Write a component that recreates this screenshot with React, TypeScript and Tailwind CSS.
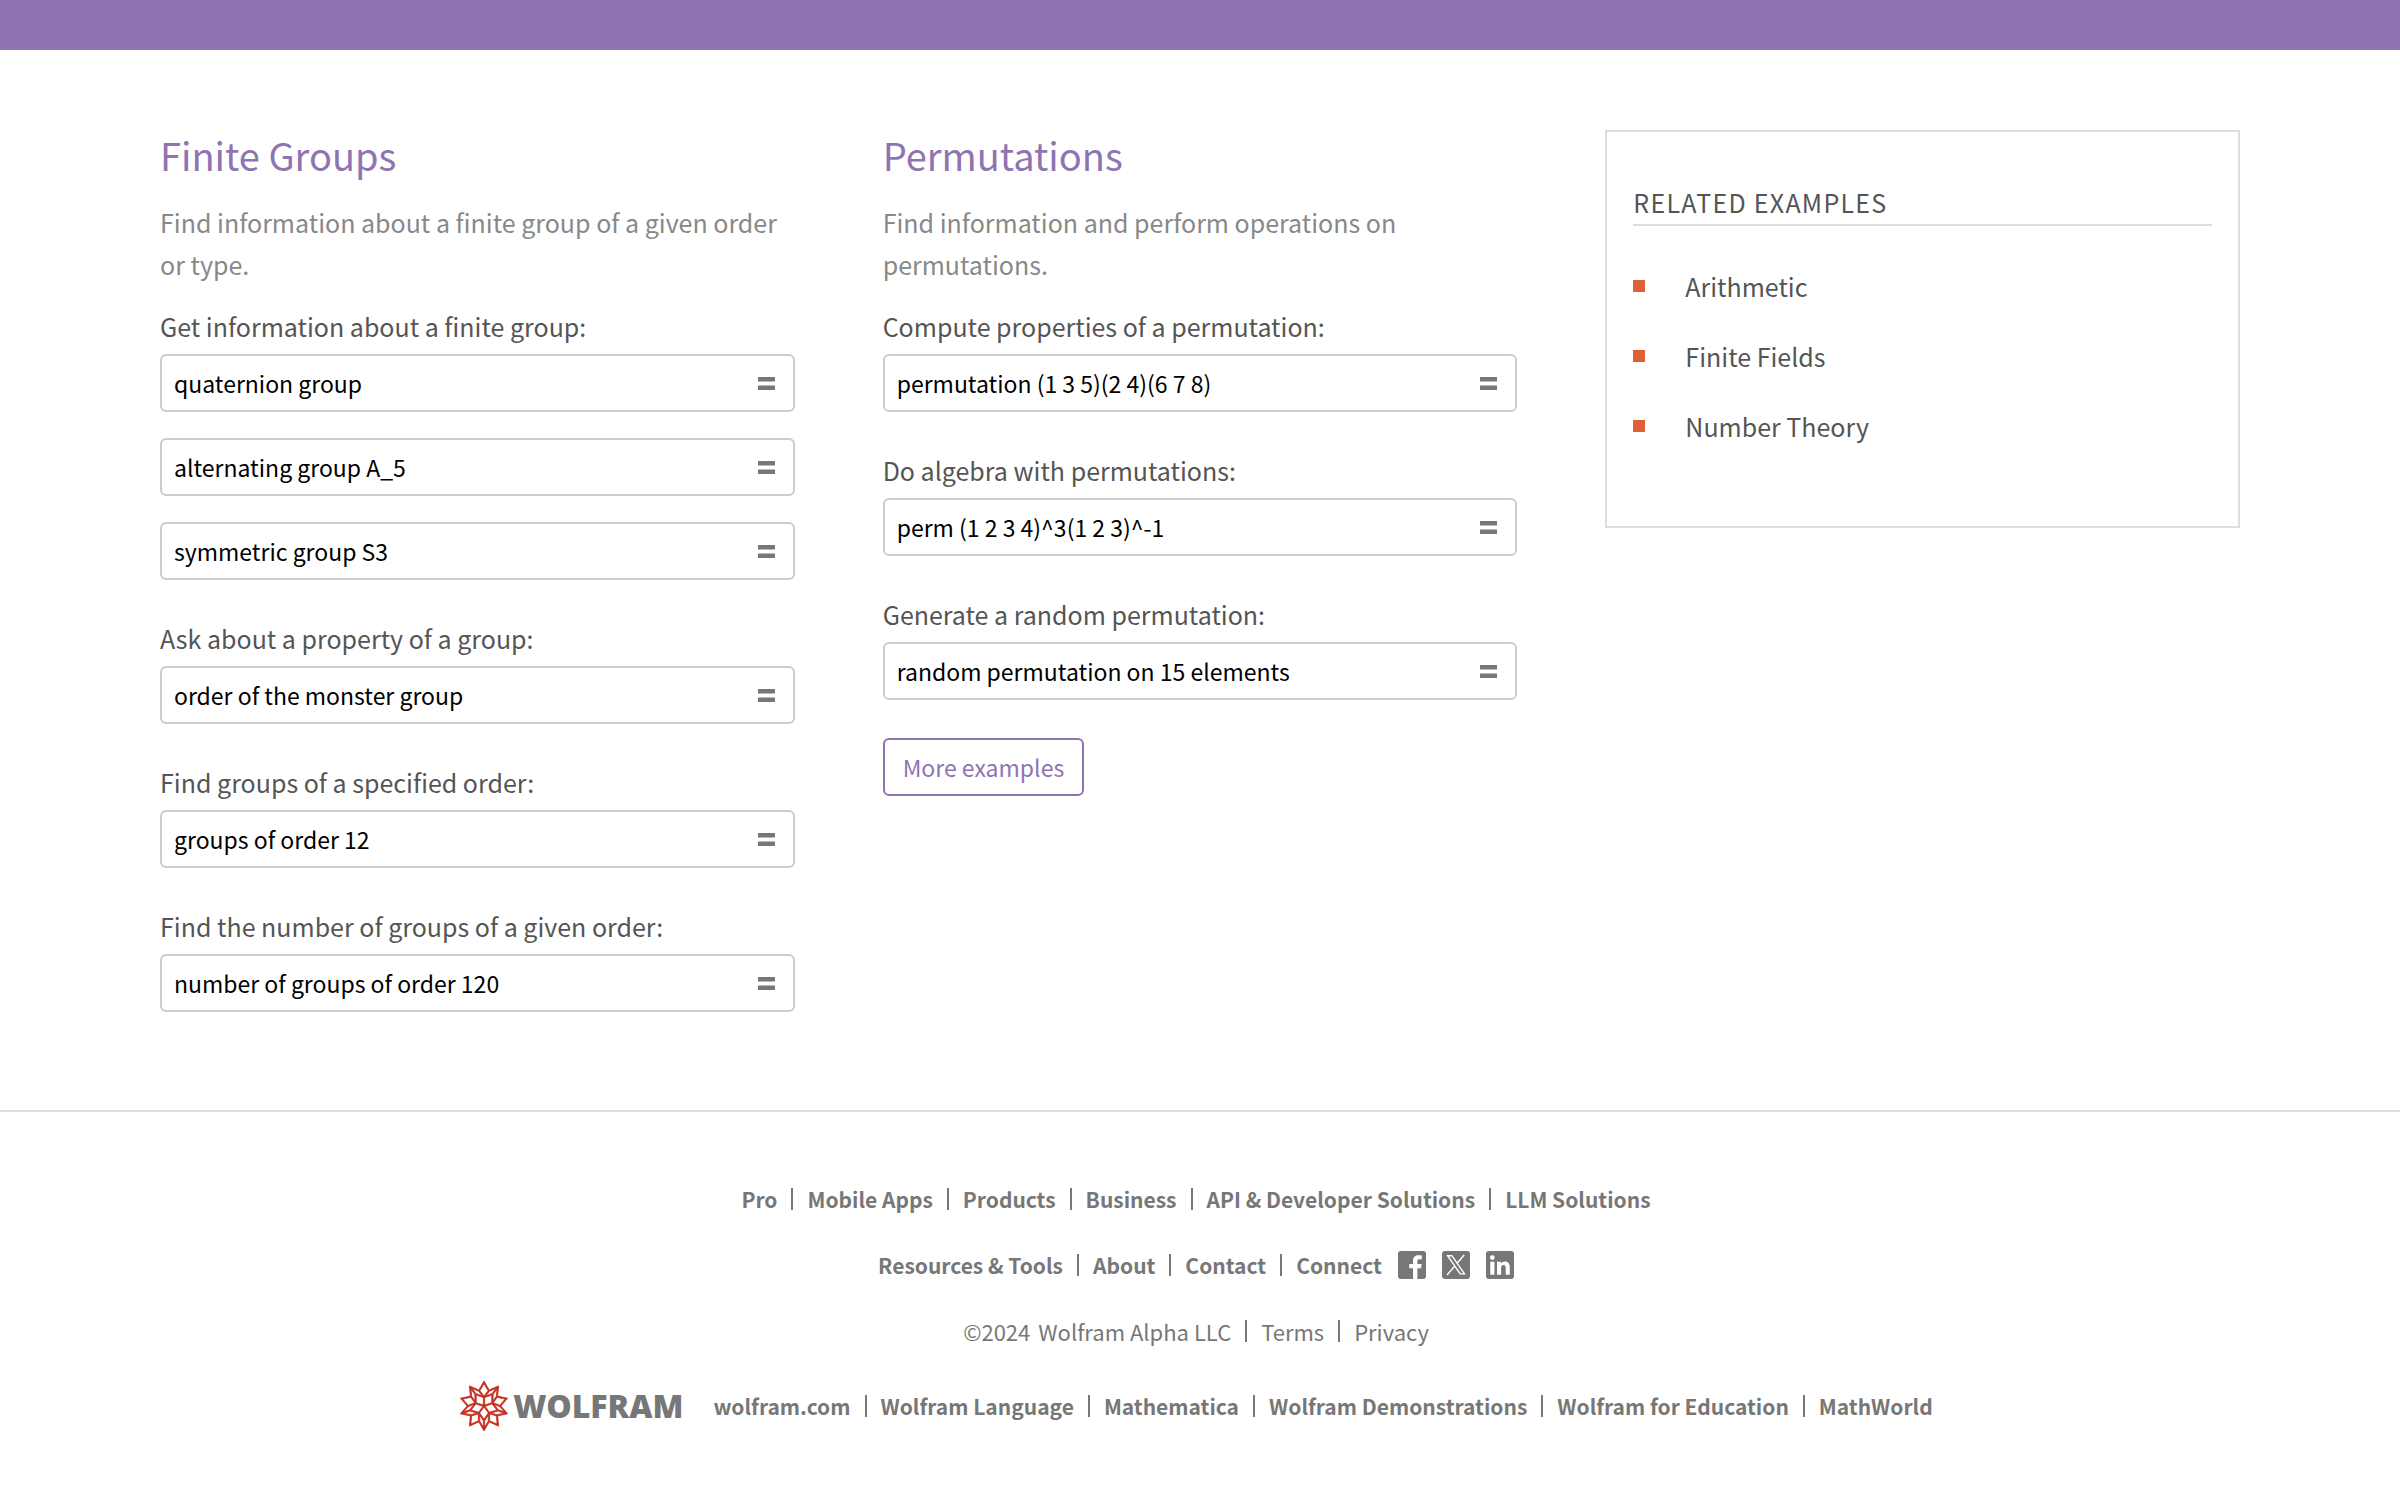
import { useId } from 'react';
import { SiWolfram } from 'react-icons/si';

type Example = { label: string; queries: string[] };

const finiteGroups: Example[] = [
  {
    label: 'Get information about a finite group:',
    queries: ['quaternion group', 'alternating group A_5', 'symmetric group S3'],
  },
  { label: 'Ask about a property of a group:', queries: ['order of the monster group'] },
  { label: 'Find groups of a specified order:', queries: ['groups of order 12'] },
  { label: 'Find the number of groups of a given order:', queries: ['number of groups of order 120'] },
];

const permutations: Example[] = [
  { label: 'Compute properties of a permutation:', queries: ['permutation (1 3 5)(2 4)(6 7 8)'] },
  { label: 'Do algebra with permutations:', queries: ['perm (1 2 3 4)^3(1 2 3)^-1'] },
  { label: 'Generate a random permutation:', queries: ['random permutation on 15 elements'] },
];

function QueryBox({ id, value, label }: { id: string; value: string; label?: string }) {
  return (
    <div className="flex h-[58px] items-center rounded-md border-2 border-[#cccccc] bg-white">
      <input
        id={id}
        aria-label={label}
        defaultValue={value}
        className="h-full min-w-0 flex-1 bg-transparent pl-3 text-[23px] text-black outline-none"
      />
      <button type="button" aria-label="Compute" className="flex h-full items-center px-[18px]">
        <svg viewBox="0 0 17 14" className="h-3.5 w-[17px]" fill="#777777" aria-hidden="true">
          <rect y="1" width="17" height="4.500" />
          <rect y="9.500" width="17" height="4.500" />
        </svg>
      </button>
    </div>
  );
}

function ExampleGroup({ label, queries }: Example) {
  const id = useId();
  return (
    <div className="flex flex-col">
      <label htmlFor={id} className="mb-[7px] leading-[42px] text-[#555555]">
        {label}
      </label>
      <div className="flex flex-col gap-[26px]">
        {queries.map((q, i) => (
          <QueryBox key={q} id={i === 0 ? id : `${id}-${i}`} value={q} label={i === 0 ? undefined : q} />
        ))}
      </div>
    </div>
  );
}

function Section({ title, intro, examples, more }: { title: string; intro: string; examples: Example[]; more?: boolean }) {
  return (
    <section>
      <h2 className="text-[38px] leading-[50px] text-[#8f74b2]">{title}</h2>
      <p className="mt-[21px] leading-[42px] text-[#888888]">{intro}</p>
      <div className="mt-5 flex flex-col gap-[37px]">
        {examples.map((e) => (
          <ExampleGroup key={e.label} {...e} />
        ))}
      </div>
      {more && (
        <button
          type="button"
          className="mt-[38px] h-[58px] rounded-md border-2 border-[#8f74b2] px-[18px] text-[23px] text-[#8f74b2]"
        >
          More examples
        </button>
      )}
    </section>
  );
}

function LinkRow({ links }: { links: string[] }) {
  return (
    <ul className="flex divide-x-2 divide-[#777777] leading-[22px]">
      {links.map((l) => (
        <li key={l} className="px-3.5 first:pl-0 last:pr-0">
          <a href="#">{l}</a>
        </li>
      ))}
    </ul>
  );
}

function Facebook() {
  return (
    <svg viewBox="0 0 28 28" className="size-7" aria-hidden="true">
      <rect width="28" height="28" rx="3" fill="#777777" />
      <path
        fill="#ffffff"
        d="M15 28V17.200h-3.700v-4.300H15V9.800C15 6.200 17.200 4.200 20.500 4.200c1.500 0 2.900.1 3.300.2v3.800h-2.300c-1.800 0-2.100.8-2.100 2.100v2.600h4.200l-.5 4.300h-3.700V28z"
      />
    </svg>
  );
}

function XLogo() {
  return (
    <svg viewBox="0 0 28 28" className="size-7" aria-hidden="true">
      <rect width="28" height="28" rx="3" fill="#777777" />
      <path fill="none" stroke="#ffffff" strokeWidth="1.4" d="M5.600 4.700h4.300l12.600 18.200h-4.300zM22.200 4l-7.600 8.700M12.600 15.200L5 24" />
    </svg>
  );
}

function LinkedIn() {
  return (
    <svg viewBox="0 0 28 28" className="size-7" aria-hidden="true">
      <rect width="28" height="28" rx="3" fill="#777777" />
      <path
        fill="#ffffff"
        d="M4.300 10.700h4.100v13.100H4.300zM6.300 4.200a2.400 2.400 0 1 1 0 4.800 2.400 2.400 0 0 1 0-4.800zM11 10.700h3.900v1.800c.6-1 1.900-2.100 3.900-2.100 4.200 0 5 2.700 5 6.300v7.100h-4.100v-6.300c0-1.500 0-3.500-2.100-3.500s-2.500 1.700-2.500 3.400v6.400H11z"
      />
    </svg>
  );
}

export default function App() {
  return (
    <div className="bg-white font-['Noto_Sans_CJK_SC',sans-serif] text-[25px]">
      <div className="h-[50px] bg-[#8f74b2]" />
      <main className="grid grid-cols-3 items-start gap-[88px] px-40 pt-20 pb-[98px]">
        <Section
          title="Finite Groups"
          intro="Find information about a finite group of a given order or type."
          examples={finiteGroups}
        />
        <Section
          title="Permutations"
          intro="Find information and perform operations on permutations."
          examples={permutations}
          more
        />
        <aside className="border-2 border-[#dddddd] px-[26px] pt-[50px] pb-[78px] text-[#555555]">
          <h2 className="border-b-2 border-[#dddddd] pb-0.5 leading-10 tracking-wider">RELATED EXAMPLES</h2>
          <ul className="mt-[39px] mb-px flex flex-col gap-7 leading-[42px]">
            {['Arithmetic', 'Finite Fields', 'Number Theory'].map((t) => (
              <li key={t} className="flex items-center gap-10">
                <span className="size-3 bg-[#dd6133]" />
                <a href="#">{t}</a>
              </li>
            ))}
          </ul>
        </aside>
      </main>
      <footer className="flex flex-col items-center border-t-2 border-[#dddddd] pt-[76px] pr-2 text-[21px] text-[#777777]">
        <div className="font-bold">
          <LinkRow links={['Pro', 'Mobile Apps', 'Products', 'Business', 'API & Developer Solutions', 'LLM Solutions']} />
        </div>
        <div className="mt-[41px] flex h-7 items-center gap-4 font-bold">
          <LinkRow links={['Resources & Tools', 'About', 'Contact', 'Connect']} />
          <a href="#" aria-label="Facebook">
            <Facebook />
          </a>
          <a href="#" aria-label="X">
            <XLogo />
          </a>
          <a href="#" aria-label="LinkedIn">
            <LinkedIn />
          </a>
        </div>
        <div className="mt-[41px] flex items-center gap-2 text-[22px] leading-[22px]">
          <span>©2024</span>
          <LinkRow links={['Wolfram Alpha LLC', 'Terms', 'Privacy']} />
        </div>
        <div className="mt-[39px] mb-[70px] flex items-center gap-[30px] font-bold">
          <a href="#" className="flex items-center gap-1">
            <SiWolfram className="size-[50px] stroke-[#c42b1c] stroke-[0.35] text-[#c42b1c]" aria-hidden="true" />
            <span className="font-['Noto_Sans',sans-serif] text-[32px] leading-10 font-black">WOLFRAM</span>
          </a>
          <LinkRow
            links={['wolfram.com', 'Wolfram Language', 'Mathematica', 'Wolfram Demonstrations', 'Wolfram for Education', 'MathWorld']}
          />
        </div>
      </footer>
    </div>
  );
}
